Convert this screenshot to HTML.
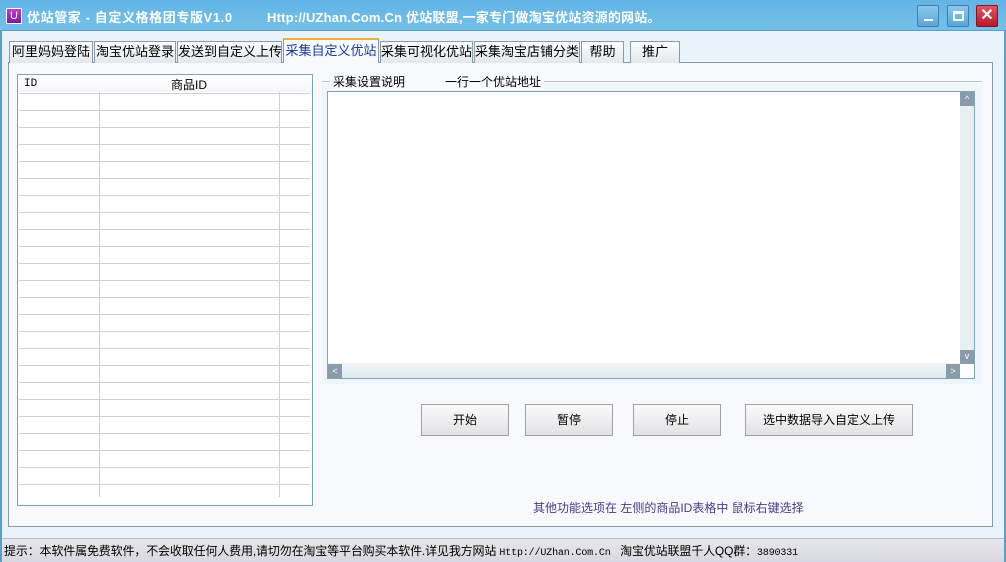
<!DOCTYPE html>
<html><head><meta charset="utf-8"><style>
*{margin:0;padding:0;box-sizing:border-box}
body{width:1006px;height:562px;overflow:hidden;position:relative;background:#e9f3fb;font-family:"Liberation Sans","Noto Sans CJK SC",sans-serif;font-size:12px;color:#000}
.a{position:absolute}
.title{left:0;top:0;width:1006px;height:31px;background:linear-gradient(#62b4e4,#74c0ea);border-bottom:1px solid #5aa0cc}
.tt{color:#fff;font-weight:bold;font-size:13px;top:7px;white-space:nowrap}
.wb{top:5px;width:22px;height:22px;border:1px solid #3d7fb0;border-radius:2px;background:linear-gradient(#8cc8ee,#5aa6d8)}
.tab{top:41px;height:22px;border:1px solid #8c9aa5;border-bottom:none;background:linear-gradient(#fbfcfd,#e3e8ec);font-size:13px;text-align:center;line-height:20px;white-space:nowrap;overflow:hidden}
.btn{top:404px;height:32px;border:1px solid #a0a0a0;background:linear-gradient(#fafafa,#e2e2e6);text-align:center;line-height:30px;font-size:12px}
.hl{left:19px;width:291px;height:1px;background:#d4d0c8}
</style></head><body>
<div class="a title"></div>
<div class="a" style="left:6px;top:8px;width:16px;height:16px;background:linear-gradient(#c43cc8,#7a1aa0);border:1px solid #fff;color:#fff;font-size:11px;text-align:center;line-height:14px">U</div>
<div class="a tt" style="left:27px;letter-spacing:0.6px">优站管家 - 自定义格格团专版V1.0</div>
<div class="a tt" style="left:267px;letter-spacing:0.2px">Http://UZhan.Com.Cn 优站联盟,一家专门做淘宝优站资源的网站。</div>
<div class="a wb" style="left:917px"><div class="a" style="left:6px;top:13px;width:9px;height:2px;background:#fff"></div></div>
<div class="a wb" style="left:947px"><div class="a" style="left:5px;top:5px;width:11px;height:10px;border:2px solid #fff;border-top-width:3px"></div></div>
<div class="a wb" style="left:976px;background:linear-gradient(#e05560,#b81828);border-color:#8a1020;color:#fff;font-size:16px;text-align:center;line-height:19px;font-weight:bold">✕</div>
<div class="a" style="left:8px;top:62px;width:985px;height:465px;border:1px solid #8c9aa5;background:#f8f9fd"></div>
<div class="a tab" style="left:9px;width:84px">阿里妈妈登陆</div>
<div class="a tab" style="left:94px;width:82px">淘宝优站登录</div>
<div class="a tab" style="left:177px;width:105px">发送到自定义上传</div>
<div class="a tab" style="left:283px;top:38px;height:25px;width:96px;background:#f8f9fd;border-top:2px solid #f0b040;color:#1a3a9a;line-height:22px">采集自定义优站</div>
<div class="a tab" style="left:380px;width:93px">采集可视化优站</div>
<div class="a tab" style="left:474px;width:106px">采集淘宝店铺分类</div>
<div class="a tab" style="left:581px;width:43px">帮助</div>
<div class="a tab" style="left:630px;width:50px">推广</div>
<div class="a" style="left:17px;top:74px;width:296px;height:432px;border:1px solid #7aa7b0;background:#fff"></div>
<div class="a" style="left:18px;top:75px;width:294px;height:17px;background:linear-gradient(#fff,#f3f7fb)"></div>
<div class="a" style="left:24px;top:78px;font-family:'Liberation Mono',monospace;font-size:11px">ID</div>
<div class="a" style="left:171px;top:76px;font-size:12px">商品ID</div>
<div class="a" style="left:99px;top:92px;width:1px;height:405px;background:#d4d0c8"></div>
<div class="a" style="left:279px;top:92px;width:1px;height:405px;background:#d4d0c8"></div>
<div id="rows"></div>
<script>
var s='';for(var y=93;y<=500;y+=17)s+='<div class="a hl" style="top:'+y+'px"></div>';document.getElementById('rows').innerHTML=s;
</script>
<div class="a" style="left:322px;top:84px;width:660px;height:300px;background:#eef5fb"></div>
<div class="a" style="left:322px;top:81px;width:660px;height:1px;background:#b6c4cc"></div>
<div class="a" style="left:330px;top:73px;background:#f8f9fd;padding:0 3px;font-size:12px">采集设置说明&nbsp;&nbsp;&nbsp;&nbsp;&nbsp;&nbsp;&nbsp;&nbsp;&nbsp;&nbsp;&nbsp;&nbsp;一行一个优站地址</div>
<div class="a" style="left:327px;top:91px;width:648px;height:288px;border:1px solid #7aa7b0;background:#fff"></div>
<div class="a" style="left:328px;top:363px;width:632px;height:15px;background:linear-gradient(#f2f6f8,#dfe9ee)"></div>
<div class="a" style="left:960px;top:92px;width:14px;height:272px;background:#e8eff3"></div>
<div class="a" style="left:960px;top:92px;width:14px;height:14px;background:#8a9cac;color:#fff;font-size:9px;text-align:center;line-height:14px">^</div>
<div class="a" style="left:960px;top:350px;width:14px;height:14px;background:#8a9cac;color:#fff;font-size:9px;text-align:center;line-height:12px">v</div>
<div class="a" style="left:328px;top:364px;width:14px;height:14px;background:#8a9cac;color:#fff;font-size:9px;text-align:center;line-height:14px">&lt;</div>
<div class="a" style="left:946px;top:364px;width:14px;height:14px;background:#8a9cac;color:#fff;font-size:9px;text-align:center;line-height:14px">&gt;</div>
<div class="a btn" style="left:421px;width:88px">开始</div>
<div class="a btn" style="left:525px;width:88px">暂停</div>
<div class="a btn" style="left:633px;width:88px">停止</div>
<div class="a btn" style="left:745px;width:168px">选中数据导入自定义上传</div>
<div class="a" style="left:533px;top:499px;color:#4a3a8a;font-size:12px">其他功能选项在 左侧的商品ID表格中 鼠标右键选择</div>
<div class="a" style="left:0;top:538px;width:1006px;height:24px;background:linear-gradient(#e6e6ec,#d8d8e0);border-top:1px solid #b8bcc4"></div>
<div class="a" style="left:4px;top:542px;font-size:12px;white-space:nowrap;letter-spacing:-0.15px">提示：本软件属免费软件，不会收取任何人费用,请切勿在淘宝等平台购买本软件.详见我方网站 <span style="font-family:'Liberation Mono',monospace;font-size:10px">Http://UZhan.Com.Cn</span>&nbsp;&nbsp; 淘宝优站联盟千人QQ群：<span style="font-family:'Liberation Mono',monospace;font-size:10px">3890331</span></div>
<div class="a" style="left:0;top:31px;width:2px;height:531px;background:#5aa0cc"></div>
<div class="a" style="right:0;top:31px;width:2px;height:531px;background:#5aa0cc"></div>
</body></html>
